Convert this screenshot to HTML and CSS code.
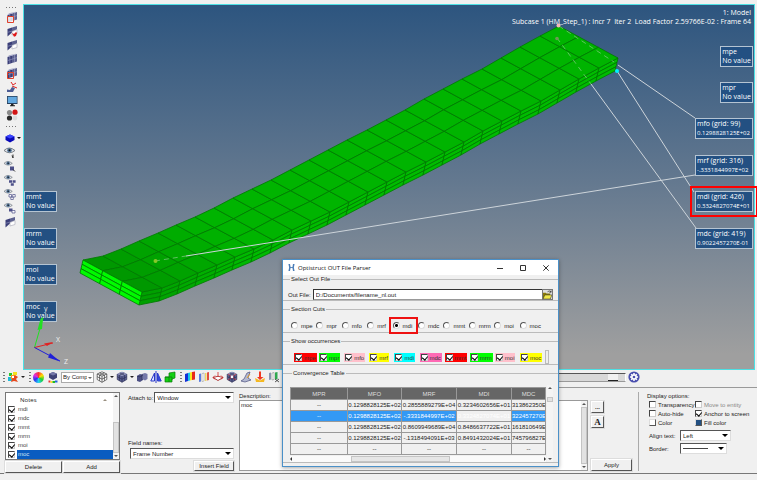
FILE: index.html
```html
<!DOCTYPE html>
<html lang="en">
<head>
  <meta charset="UTF-8">
  <title>Optistruct OUT File Parser</title>
  <meta name="viewport" content="width=device-width, initial-scale=1.0">
  <link rel="stylesheet" href="styles.css">
</head>
<body>
  <!-- shared icon shapes -->
  <svg class="defs" aria-hidden="true">
    <symbol id="i-slab" viewBox="0 0 12 12">
      <path d="M1.500 4 6 2.500v7.500L1.500 11.500z" fill="#3b3f78"/><path d="M6 2.500l5-1.500v7.500L6 10z" fill="#5c618f"/>
      <path d="M1.500 4 3 2.200 11 .6 6 2.500z" fill="#a9acca"/><path d="M1.500 7.600 11 4.600M3.800 3.400v7.200M8.500 1.800v7.400" stroke="#a9acd0" stroke-width=".5"/>
    </symbol>
    <symbol id="i-half" viewBox="0 0 12 12">
      <path d="M1.500 4 6 2.500v5L1.500 11.500z" fill="#3b3f78"/><path d="M6 2.500l5-1.500v3.500L6 6.500z" fill="#5c618f"/>
      <path d="M6 6.500l5-2v4L6 10z" fill="#fff" stroke="#a5a5b4" stroke-width=".6"/><path d="M1.500 7.400 6 6" stroke="#a9acd0" stroke-width=".5"/>
    </symbol>
    <symbol id="i-cube" viewBox="0 0 12 12">
      <path d="M6 .8 10.800 3v5.500L6 11.300 1.200 8.500V3z" fill="#5b6092"/><path d="M6 .8 10.800 3 6 5.200 1.200 3z" fill="#9195bd"/>
      <path d="M6 5.200v6.100M1.200 5.700 6 8.200l4.800-2.500M3.600 4.100v5.800M8.400 4.100v5.800M3.600 1.900l4.800 2.200M8.400 1.900 3.600 4.100M1.200 3v5.500L6 11.300l4.800-2.800V3" fill="none" stroke="#25294f" stroke-width=".6"/>
    </symbol>
    <symbol id="i-wire" viewBox="0 0 12 12">
      <path d="M6 .8 10.800 3v5.500L6 11.300 1.200 8.500V3zM1.200 3 6 5.200 10.800 3M6 5.200v6.100M1.200 5.700 6 8.200l4.800-2.500M3.600 4.100v5.800M8.400 4.100v5.800M3.600 1.900l4.800 2.200M8.400 1.900 3.600 4.100" fill="#fff" stroke="#3c3c3c" stroke-width=".7"/>
    </symbol>
    <symbol id="i-eye" viewBox="0 0 12 12">
      <path d="M0 4.500Q5-.5 11 4.500 5.500 9 0 4.500z" fill="#e2e7ec" stroke="#6d737b" stroke-width=".9"/>
      <circle cx="5.500" cy="4.300" r="2.300" fill="#54779c"/><circle cx="5.500" cy="4.300" r="1" fill="#111"/>
    </symbol>
  </svg>

  <main class="workspace">
    <nav class="side" aria-label="View tools">
      <span class="grip-h"></span>
      <button class="tool" aria-label="Section"><svg><use href="#i-slab"/><path d="M1.500 5.500h6v6h-6z" fill="#fff" fill-opacity=".8" stroke="#e0402a"/></svg></button>
      <button class="tool" aria-label="Clip"><svg><use href="#i-half"/><path d="M6 8l2 1 2-2 1 1-1 3-2 .8z" fill="#e01818"/></svg></button>
      <button class="tool" aria-label="Mask"><svg><use href="#i-half"/></svg></button>
      <button class="tool" aria-label="Solid"><svg><use href="#i-slab"/></svg></button>
      <button class="tool" aria-label="Cut"><svg><use href="#i-slab"/><path d="M1.500 5.500h6v6h-6z" fill="none" stroke="#e0402a"/></svg></button>
      <button class="tool" aria-label="Tracking"><svg><path d="M1 11V8.500L4 9l2-3 3 1-2 4z" fill="#4c5c94"/><path d="M5 1l2 3 3-2M6 5l5 2" stroke="#e02222" fill="none"/></svg></button>
      <button class="tool" aria-label="Display"><svg><path d="M1 1h10.500v8H1z" fill="#27415f"/><path d="M1.800 1.800h9v6.200h-9z" fill="#63a9e0"/><path d="M5 9h2.500v1.300H9v1H4v-1h1z" fill="#222"/></svg></button>
      <button class="tool" aria-label="Materials"><svg><circle cx="3.500" cy="3.500" r="2.600" fill="#8b8b8b"/><circle cx="9" cy="3.200" r="2.600" fill="#d21414"/><circle cx="3.500" cy="9" r="2.600" fill="#2a2a2a"/><circle cx="9" cy="9" r="2.400" fill="#ddd"/></svg></button>
      <span class="grip-h"></span>
      <button class="tool drop" aria-label="Components"><svg><path d="M6 2.500 10.500 4.500v3.500L6 10.500 1.500 8V4.500z" fill="#0909b8"/><path d="M6 2.500l4.500 2L6 6.500l-4.500-2z" fill="#3a44ff"/></svg></button>
      <button class="tool eye" aria-label="Show"><svg><use href="#i-eye"/><path d="M9 8.500v3.500L8 9.500" stroke="#333" fill="none"/></svg></button>
      <button class="tool eye" aria-label="Isolate"><svg><use href="#i-eye" width="9" height="9"/><path d="M6 6.500h4v4H6z" fill="#4c4f88"/><path d="M9 9.500l2 2" stroke="#333"/></svg></button>
      <button class="tool eye" aria-label="Show all"><svg><use href="#i-eye" width="9" height="9"/><path d="M5 6.200h3v2.600H5zM8.600 6.200h3v2.600h-3zM6.800 9.200h3v2.600h-3z" fill="#4c4f88"/></svg></button>
      <button class="tool eye" aria-label="Hide"><svg><use href="#i-eye" width="9" height="9"/><path d="M5 6.500h2.500V9H5zM8.700 6.500h2.500V9H8.700zM6.800 9.200h2.500v2.300H6.800z" fill="#fff" stroke="#4c4f88" stroke-width=".7"/></svg></button>
      <button class="tool eye" aria-label="Reverse"><svg><use href="#i-eye" width="9" height="9"/><path d="M5 6.500h3.500v3H5z" fill="#4c4f88"/><path d="M8 8.500h3V11H8z" fill="#fff" stroke="#4c4f88" stroke-width=".7"/></svg></button>
      <button class="tool eye" aria-label="Partial"><svg><use href="#i-half"/></svg></button>
    </nav>

    <section class="viewport" aria-label="Model view">
      <svg class="scene" viewBox="24 5 730 364">
        <g id="beam"></g>
        <g class="leaders">
          <path d="M618 65 695 118M617 71 694 192M591 84 696 228M186 256 695 175"/>
          <path class="hidden-line" d="M155 261 186 256M557 38 591 84M559 26 614 62"/>
        </g>
        <circle cx="558.500" cy="25.500" r="2" fill="#f5b8b8"/>
        <circle cx="557" cy="38.500" r="1.800" fill="#6d9a55"/>
        <circle cx="617" cy="71" r="2" fill="#00f0ff"/>
        <circle cx="155.500" cy="261" r="2" fill="#86c828"/>
      </svg>
      <p class="caption">1: Model<br>Subcase 1 (HM_Step_1) : Incr 7&nbsp; Iter 2&nbsp; Load Factor 2.59766E-02 : Frame 64</p>

      <div class="tag right row1">mpe<br>No value</div>
      <div class="tag right row2">mpr<br>No value</div>
      <div class="tag right wide row3">mfo (grid: 99)<br><span class="num">0.1298828125E+02</span></div>
      <div class="tag right wide row4">mrf (grid: 316)<br><span class="num">-.3331844997E+02</span></div>
      <div class="tag right wide row5 marked">mdi (grid: 426)<br><span class="num">0.3324827074E+01</span></div>
      <div class="tag right wide row6">mdc (grid: 419)<br><span class="num">0.9022457270E-01</span></div>
      <div class="tag left row5">mmt<br>No value</div>
      <div class="tag left row6">mrm<br>No value</div>
      <div class="tag left row7">moi<br>No value</div>
      <div class="tag left row8">moc<br>No value</div>

      <svg class="triad" viewBox="30 303 42 64">
        <path d="M34.500 347.500 43 318" stroke="#22e022"/><path d="M40.500 319 43 317l-1 12-4.500 1z" fill="#22e022"/>
        <path d="M34.500 347.500 53 343" stroke="#e02222"/><path d="M44 343.500l9-1.500-6 4z" fill="#e02222"/>
        <path d="M34.500 347.500 60 361" stroke="#2020d8"/><path d="M50 353l10 8.500-12-4z" fill="#2020d8"/>
        <text x="44" y="311">y</text><text x="56" y="342">X</text><text x="64" y="364">Z</text>
      </svg>
    </section>
  </main>

  <div class="toolbar">
    <span class="grip-v"></span>
    <button class="tool" aria-label="Animate"><svg><path d="M2 2h3v3H2z" fill="#28c828"/><path d="M6 1h4v3H6z" fill="#f5e020"/><path d="M1 6h4v4H1z" fill="#1fb9d8"/><path d="M4 4h4v4H4z" fill="#f59a20"/><path d="M8 4l3 2-2 2 2 3-4-1-3 1 1-3z" fill="#e8481c"/><path d="M5 5h2v2H5z" fill="#fff"/></svg></button>
    <span class="caret"></span>
    <span class="grip-v gap"></span>
    <button class="tool" aria-label="Color"><span class="wheel"></span></button>
    <button class="tool" aria-label="Color by"><svg><path d="M6 1l4 1.800v4L6 9 2 6.800v-4z" fill="#3e4275"/><path d="M6 1l4 1.800L6 4.600 2 2.800z" fill="#7478a8"/><path d="M1.500 9.500h2v2h-2z" fill="#e33"/><path d="M3.500 10h2v2h-2z" fill="#fd2"/><path d="M5.500 10h2.500v2H5.500z" fill="#2b2"/><path d="M8 9.500h2.500v2H8z" fill="#26d"/></svg></button>
    <span class="select comp"><select aria-label="Color mode"><option>By Comp</option></select></span>
    <button class="tool" aria-label="Wireframe"><svg><use href="#i-wire"/></svg></button>
    <span class="caret"></span>
    <button class="tool" aria-label="Shaded"><svg><use href="#i-cube"/></svg></button>
    <span class="caret"></span>
    <button class="tool" aria-label="Elements"><svg><path d="M1 5l3-2 3 1v5l-3 2-3-1z" fill="#4c5084"/><path d="M6 3l3-1 2.500 1v5L9 9.500 6 8z" fill="#7478a8"/><path d="M6 3v6M1 5l3 1 3-2" stroke="#25294f" stroke-width=".6" fill="none"/></svg></button>
    <button class="tool" aria-label="Mirror"><svg><path d="M.8 10 4.500 2v8zM11.200 10 7.500 2v8z" fill="#dbe3ff" stroke="#2736c8"/><path d="M7.500 2 11.200 10H7.500z" fill="#3346d8"/><path d="M6 0v12" stroke="#2736c8"/></svg></button>
    <button class="tool" aria-label="Assembly"><svg><path d="M5 2l6-1v6l-3 1v3H1V6h4z" fill="#12d012" stroke="#0a7a0a" stroke-width=".7"/><path d="M1 6h4v5M5 6h3v3" stroke="#0a7a0a" fill="none" stroke-width=".7"/></svg></button>
    <span class="grip-v gap"></span>
    <button class="tool" aria-label="Contour"><svg><path d="M1 3l3-1v8l-3 1z" fill="#1430d8"/><path d="M4 2l2-.5v8L4 10z" fill="#18c8e8"/><path d="M6 1.500 8 1v8l-2 .5z" fill="#f8e820"/><path d="M8 1l3-.5v8L8 9z" fill="#e82818"/></svg></button>
    <button class="tool" aria-label="Iso"><svg><path d="M1 3l2-.5v8L1 11z" fill="#5a7ce0"/><path d="M4 2.500 6 2v8l-2 .5z" fill="#fff" stroke="#888" stroke-width=".5"/><path d="M7 2h1.500v8H7z" fill="#f0d860"/><path d="M9 1.500l2-.5v8l-2 .5z" fill="#e05040"/></svg></button>
    <button class="tool" aria-label="Vector"><svg><path d="M1 6.500Q6 4 11 6.500L6 9.500z" fill="#fff" stroke="#b03a3a"/><path d="M6 1v5M3 4.500l-2 2 2 2M9 4.500l2 2-2 2" stroke="#d02828" fill="none" stroke-width=".8"/></svg></button>
    <button class="tool" aria-label="Tensor"><svg><use href="#i-cube"/><path d="M2 3l8 6M10 3 2 9" stroke="#e03030" stroke-width=".7"/><circle cx="6" cy="6" r="1.200" fill="#fff"/></svg></button>
    <button class="tool" aria-label="Deformed"><svg><path d="M1 10l3-2 3-6 3-1-2 6 3 2-6 2z" fill="#b5bad2" stroke="#4a5080" stroke-width=".7"/><path d="M7 7l3-4" stroke="#e8a020"/></svg></button>
    <button class="tool" aria-label="Streamline"><svg><path d="M5 .5h2V6h2.500L6 9 3 6h2z" fill="#f03a20"/><path d="M1 7l2 1 3 1.500L9 8l2-1-1 4H2z" fill="#f5b820"/></svg></button>
    <button class="tool" aria-label="Query"><svg><path d="M1 2l2-.5v7L1 9z" fill="#8a96b0"/><path d="M4 2l2-.5v7L4 9z" fill="#fff" stroke="#777" stroke-width=".5"/><path d="M7 1.500 9.500 1v7L7 8.500z" fill="#30a850"/><path d="M7 8l4 3M11 8l-4 3" stroke="#333" stroke-width=".8"/></svg></button>
    <input class="timeline" type="range" min="0" max="100" value="98" aria-label="Frame">
    <button class="tool gear" aria-label="Animation settings"><svg><circle cx="6" cy="6" r="5.600" fill="#4a4fae"/><path d="M6 2v8M2 6h8M3.200 3.200l5.600 5.600M8.800 3.200 3.200 8.800" stroke="#fff" stroke-width="1.500"/><circle cx="6" cy="6" r="2.800" fill="#fff"/><circle cx="6" cy="6" r="1.300" fill="#4a4fae"/></svg></button>
  </div>

  <section class="panel" aria-label="Notes">
    <div class="notes">
      <div class="list">
        <div class="rows">
          <div class="head">Notes<i class="sort"></i></div>
          <label><input type="checkbox" checked><span>mdi</span></label>
          <label><input type="checkbox" checked><span>mdc</span></label>
          <label><input type="checkbox" checked><span>mmt</span></label>
          <label><input type="checkbox" checked><span>mrm</span></label>
          <label><input type="checkbox" checked><span>moi</span></label>
          <label class="active"><input type="checkbox" checked><span>moc</span></label>
        </div>
        <div class="vscroll low"><i></i></div>
      </div>
      <div class="pair"><button class="btn">Delete</button><button class="btn">Add</button></div>
    </div>

    <div class="attach">
      <div class="line"><label for="attach">Attach to:</label><span class="select"><select id="attach"><option>Window</option></select></span></div>
      <label class="names" for="field">Field names:</label>
      <span class="select"><select id="field"><option>Frame Number</option></select></span>
      <button class="btn insert">Insert Field</button>
    </div>

    <div class="desc">
      <label for="desc">Description:</label>
      <div class="area">
        <textarea id="desc">moc</textarea>
        <div class="vscroll"><i></i></div>
      </div>
    </div>

    <div class="actions">
      <button class="btn square">...</button>
      <button class="btn square serif">A</button>
      <button class="btn apply">Apply</button>
    </div>

    <div class="display">
      <p>Display options:</p>
      <div class="opts">
        <label><input type="checkbox">Transparency</label>
        <label class="off"><input type="checkbox" disabled>Move to entity</label>
        <label><input type="checkbox">Auto-hide</label>
        <label><input type="checkbox" checked>Anchor to screen</label>
        <button class="swatch"><i></i>Color</button>
        <button class="swatch fill"><i></i>Fill color</button>
      </div>
      <div class="line"><label for="align">Align text:</label><span class="select align"><select id="align"><option>Left</option></select></span></div>
      <div class="line"><label for="border">Border:</label><span class="select border"><select id="border"><option></option></select></span></div>
    </div>
  </section>

  <div class="dialog" role="dialog" aria-labelledby="dlg-title">
    <header>
      <svg class="logo" viewBox="0 0 8 8"><path d="M.5 0h1.800L3 4 2.300 8H.5l.8-4zM7.500 0H5.700L5 4l.7 4h1.800l-.8-4z" fill="#4a7db8"/><path d="M2 4h4" stroke="#4a7db8"/></svg>
      <h1 id="dlg-title">Optistruct OUT File Parser</h1>
      <button aria-label="Minimize"><svg viewBox="0 0 6 6"><path d="M0 3.500h6"/></svg></button>
      <button aria-label="Maximize"><svg viewBox="0 0 6 6"><path d="M.5.5h5v5h-5z"/></svg></button>
      <button aria-label="Close"><svg viewBox="0 0 6 6"><path d="M.3.3l5.400 5.400M5.700.3.3 5.700"/></svg></button>
    </header>

    <fieldset class="file">
      <legend>Select Out File</legend>
      <div class="line">
        <label for="out">Out File:</label>
        <input id="out" type="text" value="D:/Documents/filename_nl.out">
        <button class="browse" aria-label="Browse"><svg viewBox="0 0 10 10"><path d="M0 3h3l1 1h4v6H0z" fill="#8a7a08"/><path d="M2 5.500h8L8 10H0z" fill="#f0e848" stroke="#333" stroke-width=".6"/><path d="M5 2q2-2 4 0M9 .5V2.500H7" stroke="#222" stroke-width=".7" fill="none"/></svg></button>
      </div>
    </fieldset>

    <fieldset class="cuts">
      <legend>Section Cuts</legend>
      <div class="ten">
        <label><input type="radio" name="cut">mpe</label>
        <label><input type="radio" name="cut">mpr</label>
        <label><input type="radio" name="cut">mfo</label>
        <label><input type="radio" name="cut">mrf</label>
        <label class="boxed"><input type="radio" name="cut" checked>mdi</label>
        <label><input type="radio" name="cut">mdc</label>
        <label><input type="radio" name="cut">mmt</label>
        <label><input type="radio" name="cut">mrm</label>
        <label><input type="radio" name="cut">moi</label>
        <label><input type="radio" name="cut">moc</label>
      </div>
    </fieldset>

    <fieldset class="shows">
      <legend>Show occurrences</legend>
      <div class="ten">
        <label class="red"><input type="checkbox" checked>mpe</label>
        <label class="green"><input type="checkbox" checked>mpr</label>
        <label class="pink"><input type="checkbox" checked>mfo</label>
        <label class="yellow"><input type="checkbox" checked>mrf</label>
        <label class="cyan"><input type="checkbox" checked>mdi</label>
        <label class="hot"><input type="checkbox" checked>mdc</label>
        <label class="red"><input type="checkbox" checked>mmt</label>
        <label class="green"><input type="checkbox" checked>mrm</label>
        <label class="pink"><input type="checkbox" checked>moi</label>
        <label class="yellow"><input type="checkbox" checked>moc</label>
      </div>
      <i class="stub"></i>
    </fieldset>

    <fieldset class="conv">
      <legend>Convergence Table</legend>
      <div class="grid">
        <div class="scroller">
          <table>
            <colgroup><col class="c1"><col class="c2"><col class="c3"><col class="c3"><col></colgroup>
            <thead><tr><th>MPR</th><th>MFO</th><th>MRF</th><th>MDI</th><th>MDC</th></tr></thead>
            <tbody>
              <tr><td>--</td><td>0.1298828125E+02</td><td>0.2855889279E+04</td><td>0.3234602656E+01</td><td>313862350E</td></tr>
              <tr class="sel"><td>--</td><td>0.1298828125E+02</td><td>-.3331844997E+02</td><td class="focus">0.3324827074E+01</td><td>322457270E</td></tr>
              <tr><td>--</td><td>0.1298828125E+02</td><td>0.8609949689E+04</td><td>0.8486637722E+01</td><td>161810649E</td></tr>
              <tr><td>--</td><td>0.1298828125E+02</td><td>-.1318494091E+03</td><td>0.8491432024E+01</td><td>745796827E</td></tr>
              <tr><td>--</td><td>--</td><td>--</td><td>--</td><td>--</td></tr>
            </tbody>
          </table>
          <div class="hscroll"><i></i></div>
        </div>
        <div class="vscroll small"><i></i></div>
      </div>
    </fieldset>
  </div>

  <script src="script.js"></script>
</body>
</html>
```
FILE: styles.css
```css
* { box-sizing: border-box; }
body {
  margin: 0;
  min-height: 100vh;
  padding-top: 4px;
  display: flex;
  flex-direction: column;
  position: relative;
  background: #f0f0f0;
  border-bottom: 2px solid #fff;
  font: 6px/8px "Liberation Sans", sans-serif;
  color: #222;
}
button, input, select, textarea { font: inherit; color: inherit; margin: 0; padding: 0; }
p { margin: 0; }
.defs { position: absolute; width: 0; height: 0; }

/* model window */
.workspace { flex: 1; display: flex; }
.side { width: 23px; display: flex; flex-direction: column; align-items: center; padding-top: 2px; }
.tool { flex: none; width: 12px; height: 14px; border: 0; background: none; display: flex; align-items: center; }
.tool svg { width: 12px; height: 12px; display: block; }
.side .drop { position: relative; margin-right: 4px; }
.side .eye { margin-right: 3px; }
.side .drop::after { content: ""; position: absolute; right: -5px; top: 6px; border: 2px solid transparent; border-top-color: #111; border-bottom: 0; }
.grip-h { width: 11px; height: 4px; background: repeating-linear-gradient(90deg, #777 0 1px, transparent 1px 3px) 0 1px / 11px 1px no-repeat; }
.side .tool + .grip-h { height: 9px; background-position: 0 4px; }
.viewport { flex: 1; position: relative; margin-right: 2px; border: 1px solid #4de0e4; background: linear-gradient(#2d557f, #63788f 48%, #9f9f9f 96%); font: 7px/9px "Open Sans", "Noto Sans", sans-serif; color: #fff; }
.scene { position: absolute; left: 0; top: 0; width: 100%; height: 100%; }
#beam path { stroke: #007a00; stroke-width: .8; stroke-linejoin: round; }
.leaders path { fill: none; stroke: #cdd4da; stroke-width: 1; }
.leaders .hidden-line { stroke: #9ccf9c; stroke-dasharray: 5 4; opacity: .6; }
.caption { position: absolute; right: 3px; top: 3px; text-align: right; }
.tag { position: absolute; height: 21px; padding: 0 1px; background: #235082; border: 1px solid #b5c4d2; white-space: nowrap; }
.wide { min-width: 58px; }
.num { font-size: 6px; }
.right { right: 1px; }
.left { left: 0; }
.row1 { top: 41px; }
.row2 { top: 77px; }
.row3 { top: 113px; }
.row4 { top: 150px; }
.row5 { top: 186px; }
.row6 { top: 223px; }
.row7 { top: 259px; }
.row8 { top: 296px; }
.marked { outline: 2px solid #f00; outline-offset: 3px; }
.triad { position: absolute; left: 6px; top: 298px; width: 42px; height: 64px; }
.triad text { fill: #eee; font-size: 7px; }

/* toolbar */
.toolbar { height: 18px; padding: 0 117px 3px 3px; display: flex; align-items: center; gap: 2px; border-bottom: 1px solid #999; }
.grip-v { width: 2px; height: 11px; background: repeating-linear-gradient(#777 0 1px, transparent 1px 3px); }
.gap { margin-left: 2px; }
.caret { width: 4px; border: 2px solid transparent; border-top-color: #222; border-bottom: 0; }
.wheel { width: 11px; height: 11px; border-radius: 50%; background: conic-gradient(#ff3030, #ffe000, #20d030, #20d0f0, #3030f0, #e030e0, #ff3030); }
.timeline { appearance: none; flex: 1; height: 9px; margin-left: 6px; background: #d8d8d8; border: 1px solid; border-color: #555 #fff #999 #888; }
.timeline::-webkit-slider-thumb { appearance: none; width: 10px; height: 7px; background: #f0f0f0; border-bottom: 1px solid #222; }

/* form parts */
.btn { background: #f0f0f0; border: 1px solid; border-color: #fff #555 #555 #fff; box-shadow: 0 0 0 1px #ddd; height: 12px; line-height: 8px; text-align: center; }
.select { display: block; position: relative; height: 11px; background: #fff; border: 1px solid; border-color: #555 #ddd #ddd #555; }
.select select { appearance: none; display: block; width: 100%; height: 9px; padding: 0 8px 0 2px; border: 0; background: none; border-radius: 0; }
.select::after { content: ""; position: absolute; right: 2px; top: 3px; border: 3px solid transparent; border-top-color: #000; border-bottom: 0; pointer-events: none; }
.comp { width: 33px; border-color: #aaa; }
.comp select { padding: 0 6px 0 1px; }
.comp::after { border-width: 2px; border-bottom: 0; border-top-color: #666; right: 1px; top: 4px; }
.line { display: flex; align-items: center; }
input[type=checkbox] { appearance: none; flex: none; width: 7px; height: 7px; background: #fff; border: 1px solid; border-color: #444 #ccc #ccc #444; position: relative; }
input[type=checkbox]:checked::after { content: ""; position: absolute; left: 1px; top: 0; width: 3px; height: 4px; border: solid #000; border-width: 0 1px 1px 0; transform: rotate(40deg); }
input[type=radio] { appearance: none; flex: none; width: 7px; height: 7px; border-radius: 50%; background: #fff; border: 1px solid; border-color: #555 #ddd #ddd #555; }
input[type=radio]:checked { background: radial-gradient(circle, #000 1px, #fff 2px); }
.vscroll { width: 6px; background: #f4f4f4; position: relative; padding: 6px 0; display: flex; flex-direction: column; flex: none; }
.vscroll i { flex: 1; background: #e2e2e2; border: 1px solid #c4c4c4; }
.vscroll::before, .vscroll::after { content: ""; position: absolute; left: 1px; border: 2px solid transparent; }
.vscroll::before { top: 2px; border-bottom-color: #555; border-top: 0; }
.vscroll::after { bottom: 2px; border-top-color: #555; border-bottom: 0; }
.vscroll.low i { flex: none; height: 31px; margin-top: 23px; }
.vscroll.small i { flex: none; height: 5px; margin-top: 6px; }

/* notes panel */
.panel { height: 86px; display: flex; padding: 4px 0 2px 5px; margin-bottom: 6px; border-bottom: 1px solid #777; }
.notes { width: 115px; display: flex; flex-direction: column; gap: 1px; }
.list { flex: 1; display: flex; background: #fff; border: 1px solid #777; }
.rows { flex: 1; padding-top: 1px; }
.rows label { display: flex; align-items: center; gap: 2px; height: 9px; padding-left: 2px; color: #444; }
.rows label span { flex: 1; height: 9px; padding-left: 1px; }
.rows .active span { background: #0a5cc0; color: #cfe0f5; }
.head { height: 11px; padding: 0 6px 0 14px; font: 6px/10px "Open Sans", sans-serif; display: flex; align-items: center; justify-content: space-between; }
.sort { border: 2px solid transparent; border-bottom-color: #998f80; border-top: 0; }
.pair { display: grid; grid-template-columns: 1fr 1fr; gap: 1px; }
.attach { width: 106px; margin-left: 8px; display: flex; flex-direction: column; }
.attach .line .select { flex: 1; margin-left: 1px; }
.names { margin-top: 36px; }
.attach > .select { margin: 1px 0 2px 2px; }
.insert { align-self: flex-end; width: 40px; height: 12px; }
.desc { flex: 1; margin-left: 5px; display: flex; flex-direction: column; }
.area { flex: 1; display: flex; background: #fff; border: 1px solid #999; }
.area textarea { flex: 1; border: 0; padding: 0 1px; resize: none; background: none; outline: 0; }
.actions { width: 41px; margin-left: 3px; padding-top: 9px; display: flex; flex-direction: column; gap: 3px; }
.square { width: 13px; font-weight: bold; }
.serif { font: bold 9px/9px "Liberation Serif", serif; }
.apply { margin-top: auto; }
.display { width: 119px; margin-left: 6px; padding-left: 8px; border-left: 1px solid #aaa; }
.opts { display: grid; grid-template-columns: 46px 1fr; grid-auto-rows: 9px; margin: 0 0 3px 2px; }
.opts label { display: flex; align-items: center; gap: 2px; white-space: nowrap; }
.off { color: #888; }
.swatch { display: flex; align-items: center; gap: 2px; border: 0; background: none; white-space: nowrap; }
.swatch i { width: 7px; height: 7px; background: #fff; border: 1px solid; border-color: #ddd #555 #555 #ddd; }
.fill i { background: #235082; }
.display .line { margin: 0 0 2px 2px; }
.display .line label { width: 31px; }
.align { width: 51px; }
.border { width: 47px; }
.border::before { content: ""; position: absolute; left: 2px; top: 4px; width: 25px; border-top: 1px solid #444; }

/* parser window */
.dialog { position: absolute; left: 282px; top: 259px; width: 277px; background: #f0f0f0; border: 1px solid #4a90c8; padding-bottom: 3px; box-shadow: 0 1px 4px rgba(0, 0, 0, .35); }
.dialog header { height: 15px; display: flex; align-items: center; background: #fff; padding: 0 9px 0 5px; }
.logo { width: 7px; height: 7px; }
.dialog h1 { flex: 1; margin: 0 0 0 3px; font: 6px/10px "Open Sans", sans-serif; color: #111; }
.dialog header button { border: 0; background: none; margin-left: 17px; width: 6px; height: 6px; display: block; }
.dialog header svg { display: block; }
.dialog header button svg { fill: none; stroke: #333; stroke-width: 1; }
fieldset { margin: 0 0 4px; min-width: 0; border: solid #bbb; border-width: 1px 0; padding: 8px 5px 2px; position: relative; }
legend { margin-left: 2px; padding: 0 1px; height: 8px; }
.file { padding: 6px 5px 0; }
.file input { flex: 1; height: 11px; padding: 0 2px; margin-left: 2px; background: #fff; border: 1px solid; border-color: #333 #999 #999 #333; border-right: 0; outline: 0; }
.browse { width: 11px; height: 11px; border: 1px solid #777; background: #ddd; }
.browse svg { display: block; }
.ten { display: grid; grid-template-columns: repeat(10, 1fr); width: 254px; margin-left: 3px; }
.ten label { display: flex; align-items: center; height: 9px; gap: 3px; }
.boxed { outline: 2px solid #e11; outline-offset: 2px; margin-right: 4px; }
.shows .ten { padding-left: 3px; }
.shows label { padding: 0 1px; gap: 2px; justify-self: start; color: #333; }
.red { background: #f00; }
.green { background: #0f0; }
.pink { background: #ffc0cb; }
.yellow { background: #ff0; }
.cyan { background: #0ff; }
.hot { background: #ff69b4; }
.stub { position: absolute; right: 9px; bottom: 0; width: 4px; height: 14px; border: 1px solid #bbb; background: #eee; }
.conv { margin: 0; padding: 8px 5px 0 7px; }
.grid { display: flex; gap: 1px; }
.scroller { flex: 1; padding-top: 2px; }
table { width: 100%; table-layout: fixed; border-collapse: collapse; border: 1px solid #555; text-align: center; }
.c1 { width: 57px; }
.c2 { width: 54px; }
.c3 { width: 55px; }
th, td { height: 11px; padding: 0; line-height: 8px; border: 1px solid #999; overflow: hidden; white-space: nowrap; }
th { height: 12px; background: #666; color: #ddd; font-weight: normal; }
.sel td { background: #3399f5; color: #fff; }
.sel .focus { background: #f0f0f0; }
.hscroll { height: 6px; margin-top: 1px; background: #fafafa; position: relative; }
.hscroll i { display: block; width: 99px; height: 6px; margin-left: 61px; background: #e6e6e6; border: 1px solid #c4c4c4; }
.hscroll::before, .hscroll::after { content: ""; position: absolute; top: 1px; border: 2px solid transparent; }
.hscroll::before { left: 0; border-right-color: #333; border-left: 0; }
.hscroll::after { right: 0; border-left-color: #333; border-right: 0; }
```
FILE: script.js
```js
// rear top edge of the deformed beam, one node per element
const rear = [
  [83, 260], [103, 256], [121, 249], [139, 241], [158, 233], [176, 225], [195, 217],
  [214, 208], [233, 198], [252, 189], [271, 180], [290, 170], [309, 160], [328, 150],
  [347, 140], [367, 130], [386, 120], [405, 110], [424, 99], [443, 89], [462, 79],
  [482, 69], [501, 58], [520, 47], [540, 36], [559, 26]
];
const across = [59, 32];
const down = [-3, 13];
const parts = 3;

function node(i, j, k) {
  const a = j / parts;
  const d = k / parts;
  return [rear[i][0] + across[0] * a + down[0] * d, rear[i][1] + across[1] * a + down[1] * d];
}

function quad(points, fill) {
  const d = "M" + points.map(p => p[0].toFixed(1) + " " + p[1].toFixed(1)).join("L") + "Z";
  return `<path d="${d}" fill="${fill}"/>`;
}

let mesh = "";
for (let i = 0; i < rear.length - 1; i++) {
  const g = Math.min(180, 152 + i * 5);
  for (let j = 0; j < parts; j++) {
    mesh += quad([node(i, j, 0), node(i + 1, j, 0), node(i + 1, j + 1, 0), node(i, j + 1, 0)], `rgb(0,${g},0)`);
    mesh += quad([node(i, 3, j), node(i + 1, 3, j), node(i + 1, 3, j + 1), node(i, 3, j + 1)], `rgb(0,${g + 8},0)`);
  }
}
// free end
for (let j = 0; j < parts; j++) {
  for (let k = 0; k < parts; k++) {
    mesh += quad([node(0, j, k), node(0, j + 1, k), node(0, j + 1, k + 1), node(0, j, k + 1)], "#00fa00");
  }
}
document.getElementById("beam").innerHTML = mesh;
```
